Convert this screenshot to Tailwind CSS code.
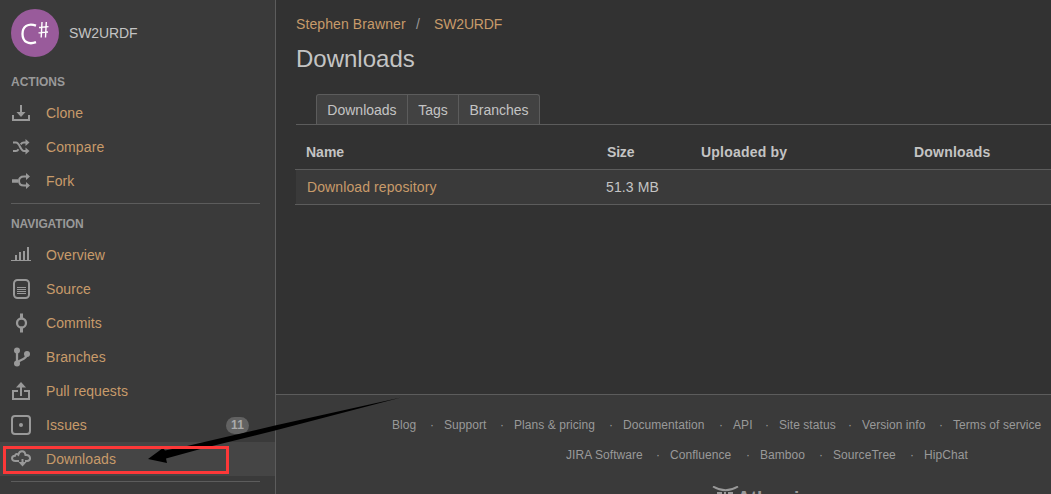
<!DOCTYPE html>
<html lang="en">
<head>
<meta charset="utf-8">
<title>SW2URDF Downloads</title>
<script src="https://cdn.jsdelivr.net/npm/@tailwindcss/browser@4"></script>
</head>
<body class="relative flex h-[494px] w-[1051px] overflow-hidden bg-[#323232] font-['Liberation_Sans',Arial,sans-serif] text-sm text-[#c4c4c4]">
<aside class="flex w-[276px] shrink-0 flex-col border-r border-[#5c5c5c] bg-[#3a3a3a]">
  <div class="mt-[9px] ml-[11px] flex h-12 items-center gap-[10px]">
    <svg class="size-12" viewBox="0 0 48 48" fill="none" stroke="#fff"><circle cx="24" cy="24" r="24" fill="#995b9b" stroke="none"/><path stroke-width="2.3" d="M25 16.600c-8-3-13.500 1-13.500 8.400 0 7.800 6 11 13.500 8.200"/><path stroke-width="1.400" d="M31 13l-.8 15.500M35.300 13l-.8 15.500M28 18.500l9.500-.9M27.500 23.900l9.500-.9"/></svg>
    <span class="tracking-[-0.1px]">SW2URDF</span>
  </div>
  <h2 class="mt-[17px] ml-[11px] h-4 text-xs leading-4 font-bold text-[#999]">ACTIONS</h2>
  <nav class="mt-[6px] tracking-[0.1px] text-[#c89b6a]">
    <a class="flex h-[34px] items-center pl-[11px]"><svg class="mr-[15px] size-5" viewBox="0 0 20 20" fill="none" stroke="#999" stroke-width="2"><path d="M2 12v5h16v-5M10 2v8"/><path d="M5.500 9h9L10 14z" fill="#999" stroke="none"/></svg>Clone</a>
    <a class="flex h-[34px] items-center pl-[11px]"><svg class="mr-[15px] size-5" viewBox="0 0 20 20" fill="none" stroke="#999" stroke-width="2"><path d="M2 5.500h3c4 0 4 8.500 8 8.500h3M2 14h3q1.500 0 2.500-1.800M9.700 7.300Q11 5.500 13 5.500h3"/><path d="M14.500 2l4 3.500-4 3.500zM14.500 10.500l4 3.500-4 3.500z" fill="#999" stroke="none"/></svg>Compare</a>
    <a class="flex h-[34px] items-center pl-[11px]"><svg class="mr-[15px] size-5" viewBox="0 0 20 20" fill="none" stroke="#999" stroke-width="2"><path stroke-width="3.500" d="M1 10h6"/><path d="M16 5.500h-3c-3 0-5 1.500-5 4.500s2 4.500 5 4.500h3"/><path d="M15 2L19 5.500 15 9zM15 11l4 3.500-4 3.500z" fill="#999" stroke="none"/></svg>Fork</a>
  </nav>
  <div class="mt-[5px] ml-[11px] w-[249px] border-t border-[#5c5c5c]"></div>
  <h2 class="mt-[12px] ml-[11px] h-4 text-xs leading-4 font-bold tracking-[-0.1px] text-[#999]">NAVIGATION</h2>
  <nav class="mt-[6px] tracking-[0.08px] text-[#c89b6a]">
    <a class="flex h-[34px] items-center pl-[11px]"><svg class="mr-[15px] size-5" viewBox="0 0 20 20" fill="#999"><path d="M0 15h20v1H0zM4 10h2v5H4zM8 7h2v8H8zM12 6h2v9h-2zM16 2h2v13h-2z"/></svg>Overview</a>
    <a class="flex h-[34px] items-center pl-[11px]"><svg class="mr-[15px] size-5" viewBox="0 0 20 20" fill="none" stroke="#999"><rect x="3" y="1" width="15" height="18" rx="3.500" stroke-width="2"/><path d="M6 8.500h9M6 10.500h9M6 12.500h9M6 14.500h9"/></svg>Source</a>
    <a class="flex h-[34px] items-center pl-[11px]"><svg class="mr-[15px] size-5" viewBox="0 0 20 20" fill="none" stroke="#999"><circle cx="10.500" cy="10" r="4.500" stroke-width="2.300"/><path stroke-width="3" d="M10.500.5V5M10.500 15v4.500"/></svg>Commits</a>
    <a class="flex h-[34px] items-center pl-[11px]"><svg class="mr-[15px] size-5" viewBox="0 0 20 20" fill="none" stroke="#999" stroke-width="2.300"><path d="M6 4v13c0-5 9.500-3 9.500-9.500"/><g fill="#999" stroke="none"><circle cx="6" cy="3.500" r="3"/><circle cx="6" cy="16.500" r="3"/><circle cx="16" cy="7" r="3"/></g></svg>Branches</a>
    <a class="flex h-[34px] items-center pl-[11px]"><svg class="mr-[15px] size-5" viewBox="0 0 20 20" fill="none" stroke="#999" stroke-width="2"><path d="M7 10H2v8h16v-8h-5M10 15V5"/><path d="M5 6.500h10L10 1z" fill="#999" stroke="none"/></svg>Pull requests</a>
    <a class="flex h-[34px] items-center pl-[11px]"><svg class="mr-[15px] size-5" viewBox="0 0 20 20" fill="none" stroke="#999" stroke-width="2"><rect x="1" y="1" width="18" height="18" rx="3"/><circle cx="10" cy="10" r="2" fill="#999" stroke="none"/></svg>Issues<span class="mr-[26px] ml-auto flex h-[17px] w-[23px] items-center justify-center rounded-full bg-[#626262] text-xs font-bold text-[#aaa]">11</span></a>
    <a class="flex h-[34px] items-center bg-[#454545] pl-[11px]"><svg class="mr-[15px] size-5" viewBox="0 0 20 20" fill="none" stroke="#999" stroke-width="2"><path d="M8 12H4.500c-4.500 0-4.500-5-.5-5.300.5-2.200 2.500-1.700 3.300-1C8.500.8 14 1 14.500 6c5.500-.5 6 6 1.500 6h-2M11.500 10v5"/><path d="M7.500 13h8l-4 4.500z" fill="#999" stroke="none"/></svg>Downloads</a>
  </nav>
  <div class="mt-[5px] ml-[11px] w-[249px] border-t border-[#5c5c5c]"></div>
</aside>
<main class="flex min-w-0 flex-1 flex-col">
  <div class="ml-5 mt-[14px] flex h-5 items-center text-[#c89b6a]"><span class="w-[120px] whitespace-nowrap tracking-[0.1px]">Stephen Brawner</span><span class="w-[18px] text-[#999]">/</span><span class="tracking-[-0.15px]">SW2URDF</span></div>
  <h1 class="mt-[10px] ml-5 text-2xl leading-[30px]">Downloads</h1>
  <div class="ml-5 mt-5 flex h-[31px] border-b border-[#5c5c5c] pl-5">
    <div class="flex divide-x divide-[#5c5c5c] rounded-t-[3px] border-x border-t border-[#5c5c5c] bg-[#424242]"><span class="flex w-[91px] items-center justify-center">Downloads</span><span class="flex w-[51px] items-center justify-center">Tags</span><span class="flex w-[80px] items-center justify-center">Branches</span></div>
  </div>
  <div class="ml-[19px] grid h-[45px] grid-cols-[301px_94px_213px_1fr] items-center border-b border-[#5c5c5c] pt-[10px] pl-[11px] font-bold tracking-[0.2px]"><span class="tracking-normal">Name</span><span class="tracking-[-0.2px]">Size</span><span>Uploaded by</span><span>Downloads</span></div>
  <div class="ml-[19px] border-b border-[#5c5c5c]"><div class="ml-px grid h-[34px] grid-cols-[299px_1fr] items-center bg-[#3a3a3a] pl-[11px] tracking-[0.1px]"><span class="text-[#c89b6a]">Download repository</span><span>51.3 MB</span></div></div>
  <footer class="mt-auto h-[100px] border-t border-[#5c5c5c] bg-[#3a3a3a] text-xs text-[#999]">
    <div class="mt-[22px] ml-[116px] flex h-4 items-center whitespace-nowrap tracking-[0.06px]">
      <span class="w-[38px]">Blog</span><span class="w-[14px]">·</span><span class="w-[56px]">Support</span><span class="w-[14px]">·</span><span class="w-[95px]">Plans &amp; pricing</span><span class="w-[14px]">·</span><span class="w-[96px]">Documentation</span><span class="w-[14px]">·</span><span class="w-[32px]">API</span><span class="w-[14px]">·</span><span class="w-[69px]">Site status</span><span class="w-[14px]">·</span><span class="w-[77px]">Version info</span><span class="w-[14px]">·</span><span>Terms of service</span>
    </div>
    <div class="mt-[14px] ml-[290px] flex h-4 items-center whitespace-nowrap tracking-[0.06px]">
      <span class="w-[90px]">JIRA Software</span><span class="w-[14px]">·</span><span class="w-[76px]">Confluence</span><span class="w-[14px]">·</span><span class="w-[59px]">Bamboo</span><span class="w-[14px]">·</span><span class="w-[77px]">SourceTree</span><span class="w-[14px]">·</span><span>HipChat</span>
    </div>
    <div class="mt-[23px] ml-[436px] flex h-2 overflow-hidden">
      <svg class="h-2 w-[28px] shrink-0" viewBox="0 0 28 8" fill="none" stroke="#999"><path stroke-width="2" d="M1 .5q12.500 7.500 25 0"/><path stroke-width="2" d="M5 7h5M12 7h2M16 7h5"/></svg><span class="mt-[2px] -ml-[3px] text-[19px] leading-5 font-bold">Atlassian</span>
    </div>
  </footer>
</main>
<svg class="absolute inset-0 h-[494px] w-[1051px]" viewBox="0 0 1051 494"><path d="M148 459L163 448l2 2.500L187 446l88-20.500L401 397.500 275 430.500 206 447.500l-40 11 1 4.500z"/><rect x="4.500" y="447.500" width="223" height="25" fill="none" stroke="#fd3838" stroke-width="3"/></svg>
</body>
</html>
